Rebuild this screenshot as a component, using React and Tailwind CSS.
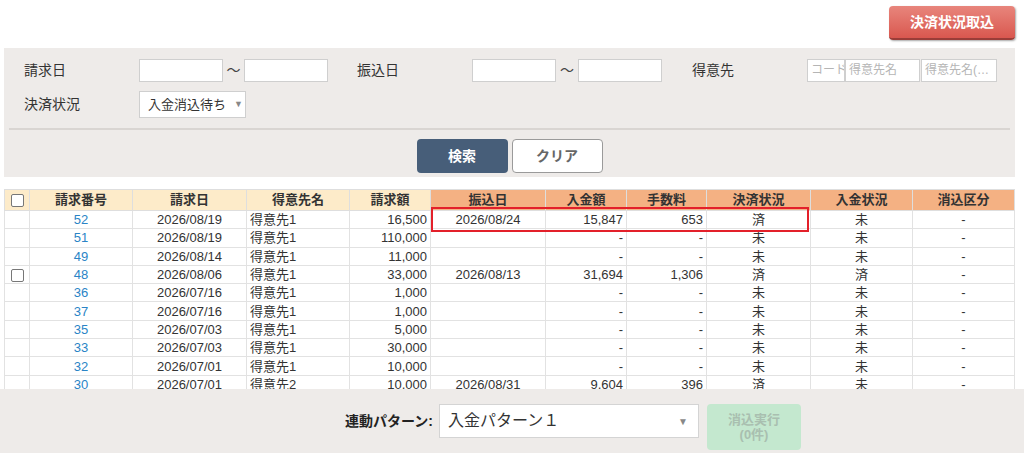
import React from "react";

const ROWS = [
  { no: "52", date: "2026/08/19", name: "得意先1", amount: "16,500", pay: "2026/08/24", paid: "15,847", fee: "653", st: "済", nst: "未" },
  { no: "51", date: "2026/08/19", name: "得意先1", amount: "110,000", pay: "", paid: "-", fee: "-", st: "未", nst: "未" },
  { no: "49", date: "2026/08/14", name: "得意先1", amount: "11,000", pay: "", paid: "-", fee: "-", st: "未", nst: "未" },
  { no: "48", date: "2026/08/06", name: "得意先1", amount: "33,000", pay: "2026/08/13", paid: "31,694", fee: "1,306", st: "済", nst: "済", check: true },
  { no: "36", date: "2026/07/16", name: "得意先1", amount: "1,000", pay: "", paid: "-", fee: "-", st: "未", nst: "未" },
  { no: "37", date: "2026/07/16", name: "得意先1", amount: "1,000", pay: "", paid: "-", fee: "-", st: "未", nst: "未" },
  { no: "35", date: "2026/07/03", name: "得意先1", amount: "5,000", pay: "", paid: "-", fee: "-", st: "未", nst: "未" },
  { no: "33", date: "2026/07/03", name: "得意先1", amount: "30,000", pay: "", paid: "-", fee: "-", st: "未", nst: "未" },
  { no: "32", date: "2026/07/01", name: "得意先1", amount: "10,000", pay: "", paid: "-", fee: "-", st: "未", nst: "未" },
  { no: "30", date: "2026/07/01", name: "得意先2", amount: "10,000", pay: "2026/08/31", paid: "9,604", fee: "396", st: "済", nst: "未" },
];

function Checkbox() {
  return <span className="inline-block h-[13px] w-[13px] rounded-[2px] border border-[#777] bg-white align-middle" />;
}

function TextBox({ w, placeholder }) {
  return (
    <div className={`${w} h-[23px] overflow-hidden whitespace-nowrap border border-[#cfcfcf] bg-white px-[3px] text-[12px] leading-[21px] text-[#b5b5b5]`}>
      {placeholder}
    </div>
  );
}

function Label({ children }) {
  return <div className="w-[115px] shrink-0 text-[14px] text-[#333]">{children}</div>;
}

export default function App() {
  const th = "border border-[#dedede] text-center text-[13px] font-bold text-[#333]";
  const td = "border border-[#e2e2e2] px-[3px] text-[13px] leading-none";
  const dark = "text-[#333]";

  return (
    <div className="flex h-[453px] w-[1024px] flex-col overflow-hidden bg-white font-['Liberation_Sans','Noto_Sans_CJK_JP',sans-serif]">
      {/* top action */}
      <div className="flex h-[48px] shrink-0 justify-end pr-[9px] pt-[6px]">
        <button
          type="button"
          className="h-[34px] w-[126px] rounded-[4px] border-b-[2px] border-[#9a3d38] bg-gradient-to-b from-[#e8857c] to-[#d9574f] text-[14px] font-bold text-white shadow-[1px_1px_2px_rgba(0,0,0,0.35)]"
        >
          決済状況取込
        </button>
      </div>

      {/* search panel */}
      <div className="ml-[4px] h-[129px] w-[1011px] shrink-0 bg-[#eeebe9] pt-[11px]">
        <div className="flex items-center pl-[20px]">
          <Label>請求日</Label>
          <TextBox w="w-[84px]" />
          <div className="w-[21px] text-center text-[14px] text-[#444]">〜</div>
          <TextBox w="w-[84px]" />
          <div className="w-[29px]" />
          <Label>振込日</Label>
          <TextBox w="w-[84px]" />
          <div className="w-[22px] text-center text-[14px] text-[#444]">〜</div>
          <TextBox w="w-[84px]" />
          <div className="w-[30px]" />
          <Label>得意先</Label>
          <TextBox w="w-[38px]" placeholder="コード" />
          <TextBox w="w-[75px]" placeholder="得意先名" />
          <div className="w-[1px]" />
          <TextBox w="w-[76px]" placeholder="得意先名(…" />
        </div>
        <div className="mt-[9px] flex items-center pl-[20px]">
          <Label>決済状況</Label>
          <div className="flex h-[27px] w-[107px] items-center border border-[#cfcfcf] bg-white pl-[8px] text-[13px] text-[#333]">
            入金消込待ち
            <span className="ml-[8px] text-[9px] text-[#888]">▼</span>
          </div>
        </div>
        <div className="mx-[5px] mt-[10px] h-[2px] bg-[#d9d5d2]" />
        <div className="mt-[9px] flex justify-center gap-[4px]">
          <button type="button" className="h-[34px] w-[91px] rounded-[4px] bg-[#475e79] text-[14px] font-bold text-white">
            検索
          </button>
          <button type="button" className="h-[34px] w-[91px] rounded-[4px] border border-[#9a9a9a] bg-white text-[14px] font-bold text-[#666]">
            クリア
          </button>
        </div>
      </div>

      {/* table */}
      <div className="relative ml-[4px] mt-[12px] min-h-0 flex-1 overflow-hidden">
        <table className="w-[1010px] table-fixed border-collapse">
          <colgroup>
            <col className="w-[25px]" />
            <col className="w-[103px]" />
            <col className="w-[114px]" />
            <col className="w-[103px]" />
            <col className="w-[81px]" />
            <col className="w-[115px]" />
            <col className="w-[81px]" />
            <col className="w-[80px]" />
            <col className="w-[104px]" />
            <col className="w-[102px]" />
            <col className="w-[102px]" />
          </colgroup>
          <thead>
            <tr className="h-[21px]">
              <th className={`${th} bg-[#fdebc9]`}><Checkbox /></th>
              <th className={`${th} bg-[#fdebc9]`}>請求番号</th>
              <th className={`${th} bg-[#fdebc9]`}>請求日</th>
              <th className={`${th} bg-[#fdebc9]`}>得意先名</th>
              <th className={`${th} bg-[#fdebc9]`}>請求額</th>
              <th className={`${th} bg-[#f4b183]`}>振込日</th>
              <th className={`${th} bg-[#f4b183]`}>入金額</th>
              <th className={`${th} bg-[#f4b183]`}>手数料</th>
              <th className={`${th} bg-[#f4b183]`}>決済状況</th>
              <th className={`${th} bg-[#f4b183]`}>入金状況</th>
              <th className={`${th} bg-[#f4b183]`}>消込区分</th>
            </tr>
          </thead>
          <tbody>
            {ROWS.map((r) => (
              <tr key={r.no} className="h-[18.3px]">
                <td className={`${td} text-center`}>{r.check && <Checkbox />}</td>
                <td className={`${td} text-center text-[#2a84c6]`}>{r.no}</td>
                <td className={`${td} ${dark} text-center`}>{r.date}</td>
                <td className={`${td} ${dark} text-left`}>{r.name}</td>
                <td className={`${td} ${dark} text-right`}>{r.amount}</td>
                <td className={`${td} ${dark} text-center`}>{r.pay}</td>
                <td className={`${td} ${dark} text-right`}>{r.paid}</td>
                <td className={`${td} ${dark} text-right`}>{r.fee}</td>
                <td className={`${td} ${dark} text-center`}>{r.st}</td>
                <td className={`${td} ${dark} text-center`}>{r.nst}</td>
                <td className={`${td} ${dark} text-center`}>-</td>
              </tr>
            ))}
          </tbody>
        </table>
        {/* highlight */}
        <div className="pointer-events-none absolute left-[427px] top-[18px] h-[25px] w-[378px] border-2 border-[#e3202a]" />
      </div>

      {/* bottom bar */}
      <div className="flex h-[64px] shrink-0 items-center bg-[#eeebe9] pl-[345px]">
        <div className="w-[94px] text-[14px] font-bold text-[#222]">連動パターン:</div>
        <div className="flex h-[34px] w-[260px] items-center justify-between border border-[#d4d4d4] bg-white pl-[8px] pr-[10px] text-[16px] text-[#333]">
          入金パターン１
          <span className="text-[10px] text-[#888]">▼</span>
        </div>
        <button
          type="button"
          className="ml-[8px] mt-[12px] h-[46px] w-[94px] rounded-[4px] bg-[#c4e8cf] text-[13px] font-bold leading-[15px] text-[#a9bfb0]"
        >
          消込実行
          <br />
          (0件)
        </button>
      </div>
    </div>
  );
}
